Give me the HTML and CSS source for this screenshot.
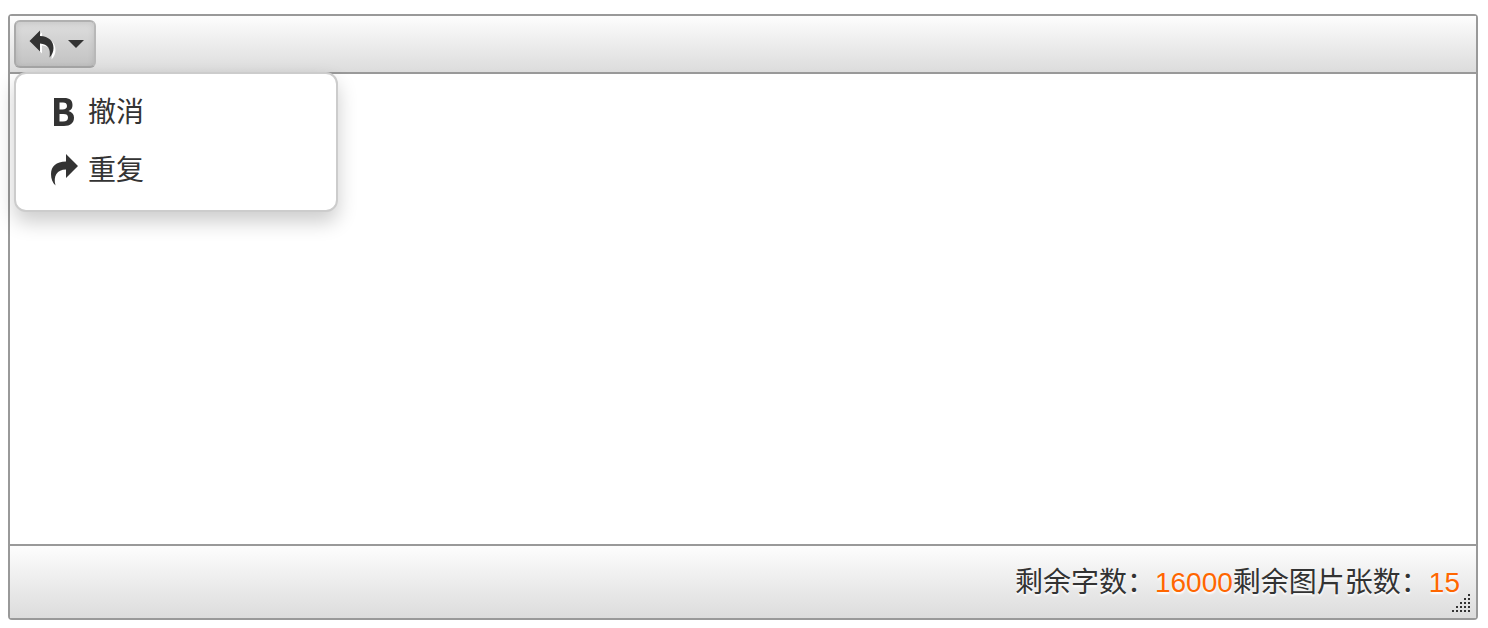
FILE: index.html
```html
<!DOCTYPE html>
<html lang="zh-CN">
<head>
<meta charset="utf-8">
<title>编辑器</title>
<link rel="stylesheet" href="styles.css">
</head>
<body>
<main class="editor">
  <header class="toolbar">
    <div class="dropdown">
      <button class="toggle" type="button" aria-label="历史" aria-haspopup="true" aria-expanded="true">
        <svg class="icon undo" viewBox="0 0 28 32" aria-hidden="true"><path d="M1.500 13 12 2.500V8C21 8.500 25.500 13 25.500 20C25.500 24 24 27 21.500 29.500C23 21 20 16 12 15.500V23.500Z"/></svg>
        <svg class="caret" viewBox="0 0 16 8" aria-hidden="true"><path d="M0 0H16L8 8Z"/></svg>
      </button>
      <div class="menu">
        <button class="item" type="button">
          <svg class="icon" viewBox="0 0 28 34" aria-hidden="true"><path fill-rule="evenodd" d="M4 2H14C20 2 22.500 4.500 22.500 9C22.500 12 21.500 14 18.500 15C22 16 24 18.500 24 21.500C24 27 20.500 30 14 30H4ZM9.500 6.500V13.500H12.500C15.500 13.500 17 12 17 10C17 7.500 15.500 6.500 13 6.500ZM9.500 18V25.500H13C16.500 25.500 18 24 18 21.500C18 19 16.500 18 13.500 18Z"/></svg>
          <span>撤消</span>
        </button>
        <button class="item" type="button">
          <svg class="icon" viewBox="0 0 28 34" aria-hidden="true"><path d="M28 12 16 0V7.500C6 8 1 12 1 20C1 25 2.500 28.500 5.500 31.500C3 22 7 15.500 16 15.500V24Z"/></svg>
          <span>重复</span>
        </button>
      </div>
    </div>
  </header>
  <section class="content" contenteditable="true" aria-label="正文"></section>
  <footer class="status">
    <span>剩余字数：</span><span class="count">16000</span><span>剩余图片张数：</span><span class="count">15</span>
    <svg class="grip" viewBox="0 0 18 18" aria-hidden="true"><path d="M16 0h2v2h-2zM12 4h2v2h-2zM16 4h2v2h-2zM8 8h2v2h-2zM12 8h2v2h-2zM16 8h2v2h-2zM4 12h2v2h-2zM8 12h2v2h-2zM12 12h2v2h-2zM16 12h2v2h-2zM0 16h2v2h-2zM4 16h2v2h-2zM8 16h2v2h-2zM12 16h2v2h-2zM16 16h2v2h-2z"/></svg>
  </footer>
</main>
</body>
</html>
```
FILE: styles.css
```css
* {
  box-sizing: border-box;
}

body {
  display: flex;
  min-height: 100vh;
  margin: 0;
  padding: 14px 10px 8px 8px;
  background: #fff;
  color: #333;
  font: 28px/40px "Liberation Sans", "Noto Sans CJK SC", sans-serif;
}

button {
  margin: 0;
  border: 0;
  background: none;
  color: inherit;
  font: inherit;
  cursor: pointer;
}

svg {
  display: block;
  fill: #333;
}

.editor {
  display: flex;
  flex: 1;
  flex-direction: column;
  border: 2px solid #999;
  border-radius: 4px;
}

.toolbar {
  padding: 4px;
  border-bottom: 2px solid #999;
  background: linear-gradient(#fdfdfd, #dcdcdc);
}

.dropdown {
  position: relative;
  width: max-content;
}

.toggle {
  display: flex;
  align-items: center;
  gap: 12px;
  width: 82px;
  height: 48px;
  padding: 0 10px 0 12px;
  border: 2px solid;
  border-color: #b0b0b0 #b8b8b8 #a5a5a5 #aaa;
  border-radius: 6px;
  background: linear-gradient(#dedede, #c2c2c2);
  box-shadow: inset 0 2px 6px rgba(0, 0, 0, 0.1);
}

.icon {
  width: 28px;
  height: 32px;
}

.undo {
  filter: drop-shadow(2px 2px 0 #fff);
}

.caret {
  width: 16px;
  height: 8px;
}

.content {
  flex: 1;
  outline: 0;
}

.menu {
  position: absolute;
  z-index: 1;
  top: 100%;
  left: 0;
  width: 324px;
  margin-top: 4px;
  padding: 10px 0;
  border: 2px solid #ccc;
  border-radius: 12px;
  background: #fff;
  box-shadow: 0 10px 20px rgba(0, 0, 0, 0.2);
}

.item {
  display: flex;
  align-items: center;
  gap: 10px;
  width: 100%;
  height: 58px;
  padding: 0 34px;
}

.item .icon {
  height: 34px;
}

.status {
  position: relative;
  display: flex;
  align-items: center;
  justify-content: flex-end;
  height: 74px;
  padding: 2px 16px 0;
  border-top: 2px solid #999;
  background: linear-gradient(#fdfdfd, #dcdcdc);
  text-shadow: 0 2px 2px #fff;
}

.count {
  color: #f60;
}

.grip {
  position: absolute;
  right: 6px;
  bottom: 6px;
  width: 18px;
  height: 18px;
}
```
